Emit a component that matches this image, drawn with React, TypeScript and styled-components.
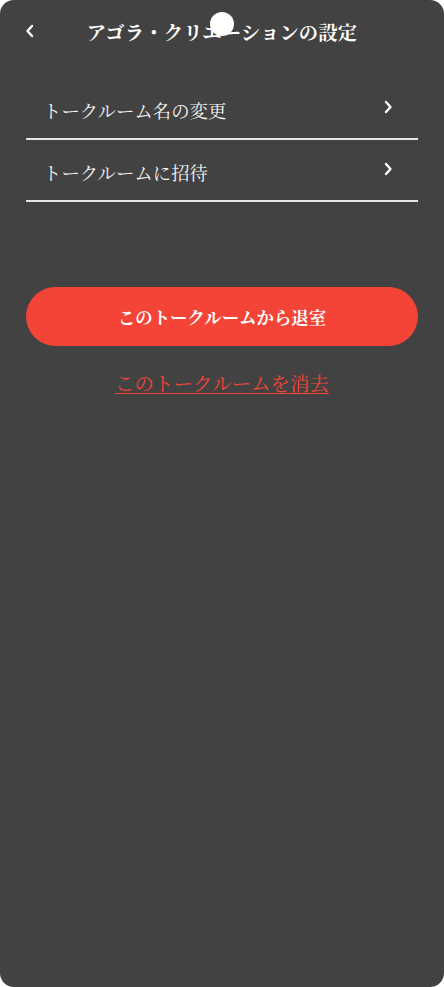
import React from 'react';
import styled, { createGlobalStyle } from 'styled-components';

const GlobalStyle = createGlobalStyle`
  html, body {
    margin: 0;
    padding: 0;
    background: #ffffff;
  }
  body {
    font-family: "Noto Serif CJK JP", "Liberation Serif", serif;
  }
`;

const Chevron = ({ dir }: { dir: 'left' | 'right' }) => (
  <svg width="10" height="14" viewBox="0 0 10 14" fill="none">
    <path
      d={dir === 'left' ? 'M7 2 L2.5 7 L7 12' : 'M3 2 L7.5 7 L3 12'}
      stroke="#ffffff"
      strokeWidth="2.4"
      strokeLinecap="round"
      strokeLinejoin="round"
    />
  </svg>
);

const menu = ['トークルーム名の変更', 'トークルームに招待'];

const App = () => {
  return (
    <>
      <GlobalStyle />
      <Screen lang="ja">
        <Header>
          <BackButton>
            <Chevron dir="left" />
          </BackButton>
          <Title>アゴラ・クリエーションの設定</Title>
          <Camera />
        </Header>

        <Menu>
          {menu.map((label) => (
            <MenuItem key={label}>
              <MenuLabel>{label}</MenuLabel>
              <MenuArrow>
                <Chevron dir="right" />
              </MenuArrow>
            </MenuItem>
          ))}
        </Menu>

        <Actions>
          <LeaveButton>このトークルームから退室</LeaveButton>
          <DeleteLink>このトークルームを消去</DeleteLink>
        </Actions>
      </Screen>
    </>
  );
};

const Screen = styled.div`
  width: 444px;
  height: 987px;
  background: #424242;
  border-radius: 14px;
  box-sizing: border-box;
  padding: 0 26px;
  display: flex;
  flex-direction: column;
  color: #ffffff;
`;

const Header = styled.div`
  position: relative;
  height: 64px;
  display: flex;
  align-items: center;
  justify-content: center;
`;

const BackButton = styled.div`
  position: absolute;
  left: -1px;
  top: 24px;
  display: flex;
`;

const Title = styled.h1`
  margin: 0;
  font-size: 19.3px;
  font-weight: 700;
  letter-spacing: 0.2px;
`;

const Camera = styled.div`
  position: absolute;
  left: 184px;
  top: 12px;
  width: 24px;
  height: 24px;
  border-radius: 50%;
  background: #ffffff;
`;

const Menu = styled.div`
  display: flex;
  flex-direction: column;
  margin-top: 14px;
`;

const MenuItem = styled.div`
  height: 62px;
  box-sizing: border-box;
  display: flex;
  align-items: center;
  justify-content: space-between;
  padding: 3px 25px 0 17px;
  border-bottom: 2px solid #e6e6e6;
`;

const MenuLabel = styled.span`
  font-size: 18.4px;
  color: #f5f5f5;
`;

const MenuArrow = styled.span`
  display: flex;
  margin-top: -6px;
`;

const Actions = styled.div`
  display: flex;
  flex-direction: column;
  align-items: center;
  margin-top: 85px;
`;

const LeaveButton = styled.div`
  width: 100%;
  height: 59px;
  border-radius: 30px;
  background: #f44438;
  display: flex;
  align-items: center;
  justify-content: center;
  font-size: 17.4px;
  font-weight: 700;
  color: #ffffff;
`;

const DeleteLink = styled.a`
  margin-top: 23px;
  font-size: 19.5px;
  color: #f44438;
  text-decoration: underline;
  text-underline-offset: 2px;
`;

export default App;
